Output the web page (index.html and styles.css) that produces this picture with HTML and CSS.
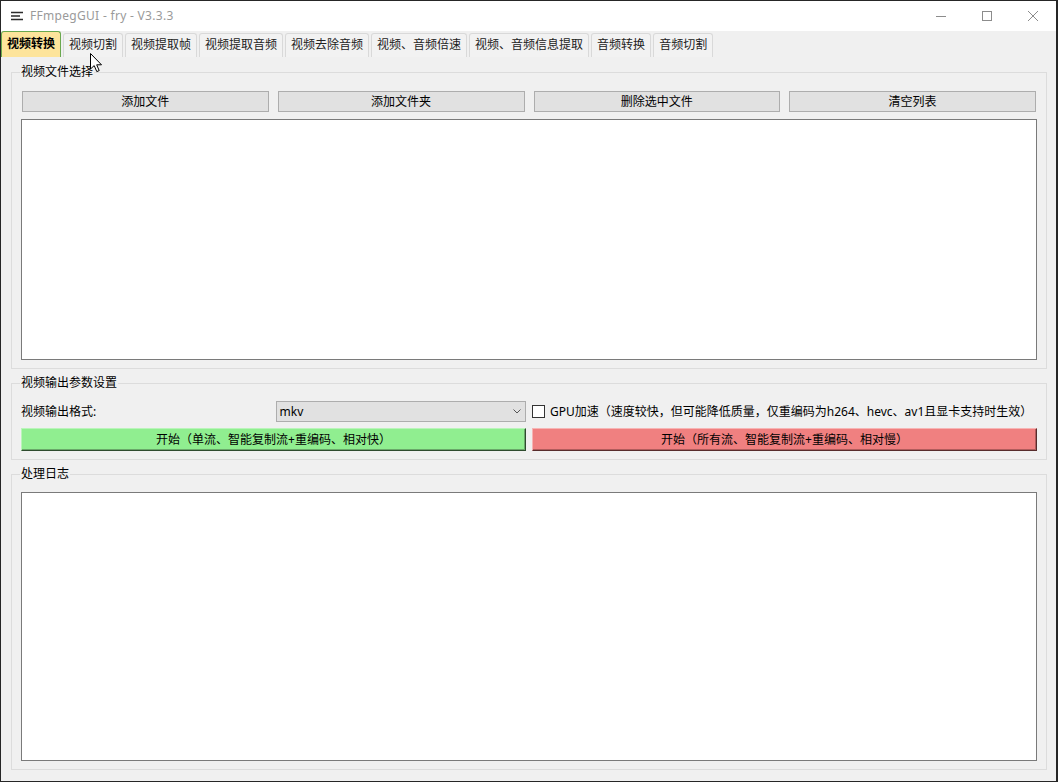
FILE: index.html
```html
<!DOCTYPE html>
<html lang="zh-CN">

<head>
    <meta charset="UTF-8">
    <title>FFmpegGUI - fry - V3.3.3</title>
    <link rel="stylesheet" href="styles.css">
</head>

<body>
    <div class="window">
        <div class="titlebar">
            <svg class="app-icon" width="12" height="10" viewBox="0 0 12 10">
                <path d="M0 1.5H12M0 5H9M0 8.5H12" stroke="#2b2b2b" stroke-width="1.4" fill="none"/>
            </svg>
            <span class="title">FFmpegGUI - fry - V3.3.3</span>
            <div class="controls">
                <span class="ctl">
                    <svg width="10" height="10" viewBox="0 0 10 10"><path d="M0 5.5H10" stroke="#8c8c8c" stroke-width="1"/></svg>
                </span>
                <span class="ctl">
                    <svg width="10" height="10" viewBox="0 0 10 10"><rect x="0.5" y="0.5" width="9" height="9" stroke="#8c8c8c" stroke-width="1" fill="none"/></svg>
                </span>
                <span class="ctl">
                    <svg width="10" height="10" viewBox="0 0 10 10"><path d="M0 0L10 10M10 0L0 10" stroke="#8c8c8c" stroke-width="1"/></svg>
                </span>
            </div>
        </div>

        <div class="tabs">
            <span class="tab active">视频转换</span>
            <span class="tab">视频切割</span>
            <span class="tab">视频提取帧</span>
            <span class="tab">视频提取音频</span>
            <span class="tab">视频去除音频</span>
            <span class="tab">视频、音频倍速</span>
            <span class="tab">视频、音频信息提取</span>
            <span class="tab">音频转换</span>
            <span class="tab">音频切割</span>
        </div>

        <div class="pane">
            <fieldset class="group">
                <legend>视频文件选择</legend>
                <div class="btn-row">
                    <button class="btn">添加文件</button>
                    <button class="btn">添加文件夹</button>
                    <button class="btn">删除选中文件</button>
                    <button class="btn">清空列表</button>
                </div>
                <div class="listbox file-list"></div>
            </fieldset>

            <fieldset class="group">
                <legend>视频输出参数设置</legend>
                <div class="param-grid">
                    <div class="format">
                        <span class="label">视频输出格式:</span>
                        <div class="combo">
                            <span>mkv</span>
                            <svg width="8" height="5" viewBox="0 0 8 5"><path d="M0.5 0.5L4 4L7.5 0.5" stroke="#555" stroke-width="1" fill="none"/></svg>
                        </div>
                    </div>
                    <label class="gpu">
                        <span class="check"></span>
                        GPU加速（速度较快，但可能降低质量，仅重编码为h264、hevc、av1且显卡支持时生效）
                    </label>
                    <button class="start green">开始（单流、智能复制流+重编码、相对快）</button>
                    <button class="start red">开始（所有流、智能复制流+重编码、相对慢）</button>
                </div>
            </fieldset>

            <fieldset class="group">
                <legend>处理日志</legend>
                <div class="listbox log"></div>
            </fieldset>
        </div>

        <svg class="cursor" width="13" height="20" viewBox="0 0 13 20">
            <path d="M0.5 0.5V16L4.2 12.6L6.8 18.6L9.2 17.6L6.7 11.8H11.5Z" fill="#fff" stroke="#000" stroke-width="1"/>
        </svg>
    </div>
</body>

</html>
```

FILE: styles.css
```css
/* General Reset */
* {
    margin: 0;
    padding: 0;
    box-sizing: border-box;
}

body {
    font-family: "Noto Sans", "Noto Sans CJK SC", sans-serif;
    font-size: 12px;
    color: #000;
    background-color: #262626;
    width: 1058px;
    height: 782px;
    overflow: hidden;
}

.window {
    position: relative;
    width: 1055px;
    height: 780px;
    margin: 1px 0 0 1px;
    background-color: #f0f0f0;
    display: flex;
    flex-direction: column;
}

/* Title bar */
.titlebar {
    height: 30px;
    background-color: #fff;
    display: flex;
    align-items: center;
    padding-left: 10px;
}

.app-icon {
    display: block;
}

.title {
    margin-left: 7px;
    color: #9a9a9a;
    font-size: 12px;
    line-height: 16px;
    letter-spacing: 0.3px;
}

.controls {
    margin-left: auto;
    display: flex;
    height: 100%;
}

.ctl {
    width: 46px;
    display: flex;
    align-items: center;
    justify-content: center;
}

.ctl svg {
    display: block;
}

/* Tabs */
.tabs {
    height: 26px;
    display: flex;
    align-items: flex-end;
    gap: 2px;
}

.tab {
    height: 24px;
    padding: 0 5px;
    line-height: 22px;
    color: #222;
    border: 1px solid #d9d9d9;
    border-bottom: none;
    border-radius: 3px 3px 0 0;
    background-color: #f2f2f2;
    white-space: nowrap;
}

.tab.active {
    height: 26px;
    line-height: 24px;
    background-color: #fde49b;
    border-color: #6aa84f;
    font-weight: bold;
    color: #000;
}

/* Content */
.pane {
    flex: 1;
    padding: 7px 9px 11px 10px;
    display: flex;
    flex-direction: column;
    gap: 6px;
}

.group {
    border: 1px solid #dcdcdc;
    padding: 11px 9px 8px 9px;
    min-width: 0;
}

.group legend {
    padding: 0 1px;
    margin-left: -1px;
    line-height: 16px;
    font-size: 12px;
}

.btn-row {
    display: flex;
    gap: 9px;
    margin: 0 1px;
}

.btn {
    flex: 1;
    height: 21px;
    font-family: inherit;
    font-size: 12px;
    line-height: 19px;
    color: #000;
    background-color: #e1e1e1;
    border: 1px solid #adadad;
}

.listbox {
    background-color: #fff;
    border: 1px solid #7a7a7a;
}

.file-list {
    margin-top: 7px;
    height: 241px;
}

.group:nth-of-type(2) {
    padding-top: 10px;
}

.group:last-child {
    flex: 1;
    padding-top: 10px;
    display: flex;
    flex-direction: column;
}

.log {
    flex: 1;
}

/* Parameters */
.param-grid {
    display: grid;
    grid-template-columns: 1fr 1fr;
    column-gap: 6px;
    row-gap: 6px;
}

.format {
    display: grid;
    grid-template-columns: 1fr 1fr;
    gap: 4px;
    align-items: center;
    height: 21px;
}

.label {
    line-height: 16px;
}

.combo {
    height: 21px;
    background-color: #e1e1e1;
    border: 1px solid #adadad;
    padding: 0 4px 0 3px;
    display: flex;
    align-items: center;
    justify-content: space-between;
    line-height: 19px;
}

.combo svg {
    display: block;
}

.gpu {
    display: flex;
    align-items: center;
    gap: 5px;
    white-space: nowrap;
    line-height: 16px;
}

.check {
    width: 13px;
    height: 13px;
    background-color: #fff;
    border: 1px solid #333;
    flex-shrink: 0;
}

.start {
    height: 23px;
    font-family: inherit;
    font-size: 12px;
    line-height: 20px;
    color: #000;
    border: 1px solid;
}

.start.green {
    background-color: #90ee90;
    border-color: #b9f5b9 #2e4b2e #2e4b2e #b9f5b9;
    box-shadow: inset -1px -1px 0 #6aa86a;
}

.start.red {
    background-color: #f08080;
    border-color: #f7b4b4 #572c2c #572c2c #f7b4b4;
    box-shadow: inset -1px -1px 0 #b05c5c;
}

/* Mouse pointer over the tab strip */
.cursor {
    position: absolute;
    left: 89px;
    top: 52px;
}
```
